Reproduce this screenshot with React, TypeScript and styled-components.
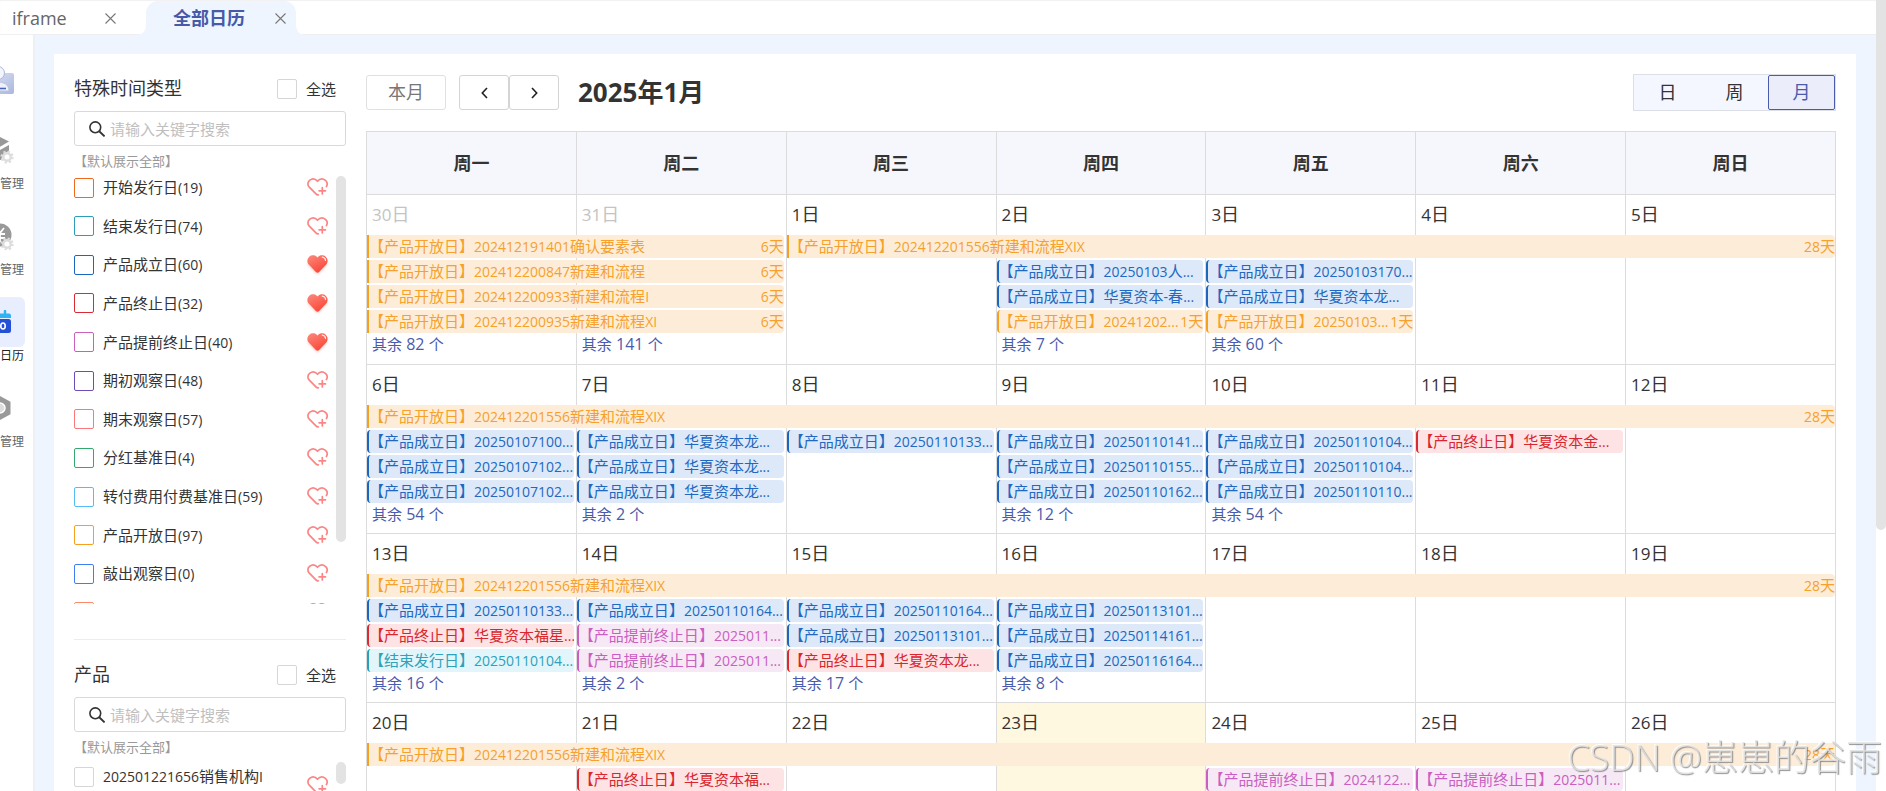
import React from "react";
import styled, { createGlobalStyle, css } from "styled-components";

const GlobalStyle = createGlobalStyle`
  * { box-sizing: border-box; }
  html, body { margin: 0; background: #fff; overflow: hidden; }
  body, button, input {
    font-family: "Open Sans", "Noto Sans CJK SC", sans-serif;
    color: #333;
  }
  button { margin: 0; padding: 0; border: 0; background: none; cursor: pointer; }
`;

const palette = {
  open: { ink: "#f5a12c", edge: "#f5a01f", fill: "#fdedd8" },
  found: { ink: "#2169c0", edge: "#1c67bd", fill: "#dde8f9" },
  end: { ink: "#d9262f", edge: "#d92b34", fill: "#fde3e3" },
  early: { ink: "#c95fc0", edge: "#c95fc0", fill: "#f7e8f6" },
  issued: { ink: "#2fa1b8", edge: "#2aa0b8", fill: "#e2f5fb" },
};
type Kind = keyof typeof palette;

const tagNames: Record<Kind, string> = {
  open: "产品开放日",
  found: "产品成立日",
  end: "产品终止日",
  early: "产品提前终止日",
  issued: "结束发行日",
};

/* ---------- shell ---------- */

const Page = styled.div`
  display: flex;
  height: 100vh;
  overflow: hidden;
`;

const Main = styled.div`
  flex: 1;
  min-width: 0;
  display: flex;
  flex-direction: column;
`;

const PageScroll = styled.div`
  flex: 0 0 10px;
  background: #fff;
`;

const PageThumb = styled.div`
  height: 67vh;
  background: #e3e3e3;
  border-radius: 0 0 5px 5px;
`;

const TabBar = styled.nav`
  flex: none;
  display: flex;
  height: 35px;
  padding-top: 1px;
  border-bottom: 1px solid #efefef;
  box-shadow: inset 0 1px 1px #f1f1f1;
`;

const Tab = styled.div<{ $active?: boolean }>`
  position: relative;
  display: flex;
  align-items: center;
  justify-content: space-between;
  width: ${(p) => (p.$active ? 150 : 146)}px;
  padding: ${(p) => (p.$active ? "0 10px 0 27px" : "0 30px 0 12px")};
  margin-bottom: -1px;
  ${(p) =>
    p.$active &&
    css`
      background: #eef5ff;
      border-radius: 12px 12px 0 0;
      &::before,
      &::after {
        content: "";
        position: absolute;
        bottom: 0;
        width: 8px;
        height: 8px;
      }
      &::before {
        left: -8px;
        background: radial-gradient(circle at 0 0, transparent 7px, #eef5ff 8px);
      }
      &::after {
        right: -8px;
        background: radial-gradient(circle at 100% 0, transparent 7px, #eef5ff 8px);
      }
    `}
`;

const TabLink = styled.a<{ $active?: boolean }>`
  font-size: 18px;
  line-height: 34px;
  text-decoration: none;
  color: ${(p) => (p.$active ? "#465aa8" : "#666")};
  font-weight: ${(p) => (p.$active ? 700 : 400)};
`;

const TabClose = styled.button`
  display: flex;
  svg { display: block; }
`;

const Below = styled.div`
  flex: 1;
  min-height: 0;
  display: flex;
`;

const SideNav = styled.nav`
  flex: 0 0 35px;
  border-right: 2px solid #eceff4;
  background: #fff;
  overflow: hidden;
  padding-top: 31px;
`;

const Avatar = styled.div`
  height: 59px;
  svg { display: block; }
`;

const SideItem = styled.a`
  display: flex;
  flex-direction: column;
  align-items: center;
  width: 50px;
  height: 86px;
  margin-left: -25px;
  text-decoration: none;
`;

const SideIcon = styled.span<{ $active?: boolean }>`
  display: flex;
  align-items: center;
  justify-content: center;
  width: 50px;
  height: 50px;
  border-radius: 6px;
  background: ${(p) => (p.$active ? "#e9eefe" : "transparent")};
`;

const SideLabel = styled.span<{ $active?: boolean }>`
  font-size: 12px;
  line-height: 18px;
  white-space: nowrap;
  color: ${(p) => (p.$active ? "#222" : "#666")};
`;

const Canvas = styled.main`
  flex: 1;
  min-width: 0;
  padding: 19px 20px 0 19px;
  background: #eef5ff;
`;

const Card = styled.div`
  display: flex;
  gap: 20px;
  height: 100%;
  overflow: hidden;
  padding: 20px 20px 0;
  background: #fff;
`;

/* ---------- filter panel ---------- */

const Filters = styled.aside`
  flex: 0 0 272px;
`;

const FilterHead = styled.div`
  display: flex;
  align-items: center;
  justify-content: space-between;
  height: 30px;
  padding-right: 10px;
`;

const FilterTitle = styled.h2`
  margin: 0;
  padding-bottom: 2px;
  font-size: 18px;
  font-weight: 400;
  line-height: 28px;
`;

const CheckLabel = styled.label`
  display: flex;
  align-items: center;
  gap: 9px;
  font-size: 15px;
  line-height: 20px;
`;

const Check = styled.input<{ $tone?: string }>`
  appearance: none;
  flex: none;
  width: 20px;
  height: 20px;
  margin: 0;
  border: 1px solid ${(p) => p.$tone ?? "#d6d6d6"};
  border-radius: 2px;
  background: #fff;
`;

const SearchBox = styled.label`
  display: flex;
  align-items: center;
  gap: 5px;
  height: 35px;
  margin-top: 7px;
  padding: 0 10px 0 14px;
  border: 1px solid #d9d9d9;
  border-radius: 3px;
`;

const SearchInput = styled.input`
  flex: 1;
  min-width: 0;
  padding: 0;
  border: 0;
  outline: 0;
  font-size: 15px;
  &::placeholder { color: #bfbfbf; opacity: 1; }
`;

const Hint = styled.p`
  margin: 0;
  font-size: 13px;
  line-height: 30px;
  color: #999;
`;

const ListPort = styled.div<{ $height: number }>`
  display: flex;
  justify-content: space-between;
  height: ${(p) => p.$height}px;
  overflow: hidden;
`;

const List = styled.ul<{ $height: number }>`
  flex: 1;
  display: grid;
  align-content: space-between;
  height: ${(p) => p.$height}px;
  margin: 0;
  padding: 1px 8px 0 0;
  list-style: none;
`;

const ListRow = styled.li<{ $low?: boolean }>`
  display: flex;
  align-items: ${(p) => (p.$low ? "flex-end" : "center")};
  justify-content: space-between;
  height: ${(p) => (p.$low ? 28 : 20)}px;
  margin-top: ${(p) => (p.$low ? 3 : 0)}px;
  ${CheckLabel} { align-self: flex-start; }
`;

const Thumb = styled.div<{ $height: number }>`
  flex: 0 0 10px;
  height: ${(p) => p.$height}px;
  border-radius: 5px;
  background: #e3e3e3;
`;

const HeartButton = styled.button`
  display: flex;
  height: 18px;
  svg { display: block; overflow: visible; }
`;

const Rule = styled.hr`
  height: 1px;
  margin: 35px 0 20px;
  border: 0;
  background: #ececec;
`;

const Latin = styled.span<{ $size: number }>`
  font-size: ${(p) => p.$size}px;
`;

/* ---------- calendar ---------- */

const Calendar = styled.section`
  flex: 1;
  min-width: 0;
`;

const Toolbar = styled.header`
  display: flex;
  align-items: center;
  height: 37px;
`;

const MonthButton = styled.button`
  width: 80px;
  height: 35px;
  border: 1px solid #e0e0e0;
  border-radius: 3px;
  font-size: 18px;
  line-height: 33px;
  color: #777;
`;

const Stepper = styled.div`
  display: flex;
  margin: 0 19px 0 13px;
`;

const StepButton = styled.button`
  display: flex;
  align-items: center;
  justify-content: center;
  width: 50px;
  height: 35px;
  border: 1px solid #d4d4d4;
  border-radius: 3px;
`;

const MonthTitle = styled.h1`
  flex: 1;
  margin: 0;
  padding-bottom: 2px;
  font-size: 26px;
  line-height: 34px;
`;

const ViewSwitch = styled.div`
  display: flex;
  height: 37px;
  border: 1px solid #dcdfe6;
  background: #f4f7ff;
`;

const ViewButton = styled.button<{ $active?: boolean }>`
  width: 67px;
  height: 35px;
  font-size: 18px;
  line-height: 33px;
  border: 1px solid ${(p) => (p.$active ? "#4a5bad" : "transparent")};
  border-radius: 2px;
  color: ${(p) => (p.$active ? "#4a5bad" : "#333")};
  background: ${(p) => (p.$active ? "#ebedfb" : "transparent")};
`;

const DayHead = styled.th`
  height: 63px;
  padding: 0 0 2px;
  border: 1px solid #dcdcdc;
  background: #f6f7fd;
  font-size: 18px;
  font-weight: 700;
`;

const DayCell = styled.td<{ $today?: boolean }>`
  height: 169px;
  padding: 0;
  vertical-align: top;
  border: 1px solid #dcdcdc;
  background: ${(p) => (p.$today ? "#fff8e0" : "#fff")};
`;

const MonthTable = styled.table`
  width: 100%;
  margin-top: 20px;
  border-collapse: collapse;
  table-layout: fixed;
  tbody tr:first-child ${DayCell} { height: 170px; }
`;

const DayNumber = styled.div<{ $muted?: boolean }>`
  height: 40px;
  padding-left: 5px;
  font-size: 18px;
  line-height: 38px;
  color: ${(p) => (p.$muted ? "#c4c4c4" : "#333")};
`;

const Lane = styled.div`
  height: 23px;
  margin-bottom: 2px;
`;

const Bar = styled(Lane)<{ $kind: Kind; $span: number }>`
  position: relative;
  z-index: 1;
  display: flex;
  justify-content: space-between;
  width: calc(${(p) => p.$span * 100}% + ${(p) => (p.$span > 2 ? p.$span - 1 : p.$span - 3)}px);
  overflow: hidden;
  border-left: 2px solid ${(p) => palette[p.$kind].edge};
  border-radius: ${(p) => (p.$span > 1 ? "0 4px 4px 0" : "4px")};
  background: ${(p) => palette[p.$kind].fill};
  color: ${(p) => palette[p.$kind].ink};
  font-size: 15px;
  line-height: 23px;
  white-space: nowrap;
`;

const BarText = styled.span`
  min-width: 0;
  overflow: hidden;
`;

const More = styled.a`
  display: block;
  margin-top: -1px;
  padding-left: 5px;
  font-size: 15px;
  line-height: 20px;
  text-decoration: none;
  color: #4a5bad;
`;

const Watermark = styled.div`
  position: fixed;
  right: 4px;
  bottom: 8px;
  z-index: 5;
  font-size: 36px;
  line-height: 50px;
  font-weight: 300;
  white-space: nowrap;
  color: rgba(226, 226, 226, 0.85);
  text-shadow: 1px 1px 1px rgba(110, 110, 110, 0.75), -1px -1px 0 rgba(255, 255, 255, 0.7);
  pointer-events: none;
`;

/* ---------- drawings ---------- */

const CloseIcon = () => (
  <svg width="11" height="11" viewBox="0 0 11 11" stroke="#777" strokeWidth="1.1">
    <path d="M.5.5l10 10M10.5.5l-10 10" />
  </svg>
);

const SearchIcon = () => (
  <svg width="16" height="16" viewBox="0 0 16 16" fill="none" stroke="#333" strokeWidth="1.6">
    <circle cx="6.3" cy="6.3" r="5.4" />
    <path d="M10.2 10.2l5.4 5.2" strokeWidth="1.9" />
  </svg>
);

const Chevron = ({ back }: { back?: boolean }) => (
  <svg width="7" height="12" viewBox="0 0 7 12" fill="none" stroke="#222" strokeWidth="1.6">
    <path d={back ? "M6 1L1.3 6 6 11" : "M1 1l4.7 5L1 11"} />
  </svg>
);

const HeartPlus = () => (
  <svg width="21" height="18" viewBox="0 0 21 18" fill="none" stroke="#fb8585" strokeWidth="1.7" strokeLinecap="round">
    <path d="M19.4 8.6C20.6 6.6 20.3 4 18.4 2.4 16 .4 12.9.6 10.5 3.1 8.1.6 5 .4 2.6 2.4.4 4.4.4 7.3 2.3 9.2l6.9 7c.7.7 1.4.9 2.2.6" />
    <path d="M15.3 9.6v6.4M12.1 12.8h6.4" />
  </svg>
);

const HeartSolid = () => (
  <svg width="21" height="18" viewBox="0 0 21 18">
    <defs>
      <linearGradient id="heartFill" x1="0" y1="0" x2="0.6" y2="1">
        <stop offset="0" stopColor="#fb8a7e" />
        <stop offset="1" stopColor="#fa4738" />
      </linearGradient>
      <filter id="heartGlow" x="-30%" y="-20%" width="160%" height="170%">
        <feGaussianBlur stdDeviation="1.5" />
      </filter>
    </defs>
    <path d="M10.5 19L2 10.5C-.5 7.500 5 3 10.500 5 16 3 21.500 7.500 19 10.500z" fill="#fdb5ae" filter="url(#heartGlow)" />
    <path d="M10.500 2.400C8.200-.3 4.500-.2 2.300 1.700-.3 4.200-.1 7.500 2 9.700l6.900 7.400c1 1 2.200 1 3.200 0L19 9.700c2.100-2.200 2.300-5.500-.3-8C16.500-.2 12.800-.3 10.500 2.400z" fill="url(#heartFill)" />
    <path d="M15.300 2.200c1.900.2 3.100 1.400 3.200 3.300" fill="none" stroke="#fff" strokeOpacity=".85" strokeWidth="1.200" strokeLinecap="round" />
  </svg>
);

const AvatarIcon = () => (
  <svg width="15" height="30" viewBox="0 0 15 30">
    <defs>
      <linearGradient id="plate" x1="0" y1="0" x2="1" y2="1">
        <stop offset="0" stopColor="#dfe4f5" />
        <stop offset="1" stopColor="#a9b6dd" />
      </linearGradient>
    </defs>
    <rect x="-14" y="7" width="28" height="21" rx="2" fill="url(#plate)" />
    <circle cx="-2" cy="7" r="6.500" fill="#f3f5fd" stroke="#aab5d8" strokeWidth="1" />
    <path d="M-12 25c0-7 5-9 10-9s11 2 11 9z" fill="#eef1fc" stroke="#b6c0e0" strokeWidth="1" />
    <path d="M-4 22.500H6" stroke="#4a66b5" strokeWidth="1.600" />
  </svg>
);

const Gear = ({ x, y }: { x: number; y: number }) => (
  <g transform={`translate(${x} ${y})`}>
    <circle r="5" fill="#ddd" />
    <circle r="5.600" fill="none" stroke="#ddd" strokeWidth="2" strokeDasharray="2.200 2.200" />
    <circle r="2.500" fill="#fff" />
  </g>
);

const BoxIcon = () => (
  <svg width="30" height="28" viewBox="0 0 30 28">
    <path d="M13 0l11 5.500-11 6.500-11-6.500z" fill="#999" />
    <path d="M3 8l10 5.500V26L3 20zM15 14l9-5v6l-6 3-2 6h-1z" fill="#999" />
    <Gear x={22} y={21} />
  </svg>
);

const YuanIcon = () => (
  <svg width="30" height="28" viewBox="0 0 30 28">
    <circle cx="15" cy="13" r="11.500" fill="#999" />
    <path d="M11 6l4 5 4-5M10 12h10M10 16h10M15 11v9" stroke="#fff" strokeWidth="1.800" fill="none" />
    <Gear x={22} y={22} />
  </svg>
);

const CalendarIcon = () => (
  <svg width="24" height="24" viewBox="0 0 24 24">
    <rect x="1" y="9" width="22" height="14" rx="2.500" fill="#2450d8" />
    <path d="M1 8V5.500A2 2 0 013 3.500h18a2 2 0 012 2V8z" fill="#2fb3f3" />
    <path d="M6.500 1v4M17 1v4" stroke="#2fb3f3" strokeWidth="2.500" strokeLinecap="round" />
    <path d="M8 13v6" stroke="#fff" strokeWidth="1.600" />
    <ellipse cx="15" cy="16" rx="2.200" ry="3" fill="none" stroke="#fff" strokeWidth="1.600" />
  </svg>
);

const NutIcon = () => (
  <svg width="24" height="26" viewBox="0 0 24 26">
    <path d="M12 1l10.500 5.800v12.400L12 25 1.500 19.200V6.800z" fill="#999" />
    <circle cx="12" cy="13" r="5" fill="#ddd" stroke="#fff" strokeWidth="1.500" />
  </svg>
);

/* ---------- data ---------- */

const dateTypes: [string, number, string, boolean][] = [
  ["开始发行日", 19, "#ee6a1f", false],
  ["结束发行日", 74, "#2aa0b8", false],
  ["产品成立日", 60, "#1c67bd", true],
  ["产品终止日", 32, "#d92b34", true],
  ["产品提前终止日", 40, "#c95fc0", true],
  ["期初观察日", 48, "#6d4cb8", false],
  ["期末观察日", 57, "#fb7878", false],
  ["分红基准日", 4, "#34a86e", false],
  ["转付费用付费基准日", 59, "#55bdf3", false],
  ["产品开放日", 97, "#f5a01f", false],
  ["敲出观察日", 0, "#3d7ff0", false],
  ["敲入观察日", 12, "#fb8a66", false],
];

interface Entry {
  kind: Kind;
  text: string;
  span?: number;
  days?: string;
}
interface Day {
  day: number;
  muted?: boolean;
  today?: boolean;
  lanes: (Entry | null)[];
  more?: number;
}

const open = (text: string, span: number, days: string): Entry => ({ kind: "open", text, span, days });
const found = (text: string): Entry => ({ kind: "found", text });
const end = (text: string): Entry => ({ kind: "end", text });
const early = (text: string): Entry => ({ kind: "early", text });
const longRun = (span: number) => open("202412201556新建和流程XIX", span, "28天");

const weeks: Day[][] = [
  [
    {
      day: 30,
      muted: true,
      lanes: [
        open("202412191401确认要素表", 2, "6天"),
        open("202412200847新建和流程", 2, "6天"),
        open("202412200933新建和流程I", 2, "6天"),
        open("202412200935新建和流程XI", 2, "6天"),
      ],
      more: 82,
    },
    { day: 31, muted: true, lanes: [null, null, null, null], more: 141 },
    { day: 1, lanes: [longRun(5)] },
    { day: 2, lanes: [null, found("20250103人..."), found("华夏资本-春..."), open("20241202...", 1, "1天")], more: 7 },
    { day: 3, lanes: [null, found("20250103170..."), found("华夏资本龙..."), open("20250103...", 1, "1天")], more: 60 },
    { day: 4, lanes: [] },
    { day: 5, lanes: [] },
  ],
  [
    { day: 6, lanes: [longRun(7), found("20250107100..."), found("20250107102..."), found("20250107102...")], more: 54 },
    { day: 7, lanes: [null, found("华夏资本龙..."), found("华夏资本龙..."), found("华夏资本龙...")], more: 2 },
    { day: 8, lanes: [null, found("20250110133...")] },
    { day: 9, lanes: [null, found("20250110141..."), found("20250110155..."), found("20250110162...")], more: 12 },
    { day: 10, lanes: [null, found("20250110104..."), found("20250110104..."), found("20250110110...")], more: 54 },
    { day: 11, lanes: [null, end("华夏资本金...")] },
    { day: 12, lanes: [] },
  ],
  [
    {
      day: 13,
      lanes: [longRun(7), found("20250110133..."), end("华夏资本福星..."), { kind: "issued", text: "20250110104..." }],
      more: 16,
    },
    { day: 14, lanes: [null, found("20250110164..."), early("2025011..."), early("2025011...")], more: 2 },
    { day: 15, lanes: [null, found("20250110164..."), found("20250113101..."), end("华夏资本龙...")], more: 17 },
    { day: 16, lanes: [null, found("20250113101..."), found("20250114161..."), found("20250116164...")], more: 8 },
    { day: 17, lanes: [] },
    { day: 18, lanes: [] },
    { day: 19, lanes: [] },
  ],
  [
    { day: 20, lanes: [longRun(7)] },
    { day: 21, lanes: [null, end("华夏资本福...")] },
    { day: 22, lanes: [] },
    { day: 23, today: true, lanes: [] },
    { day: 24, lanes: [null, early("2024122...")] },
    { day: 25, lanes: [null, early("2025011...")] },
    { day: 26, lanes: [] },
  ],
];

/* ---------- pieces ---------- */

/* Latin runs get their own size beside the Chinese around them. */
const Mixed = ({ text, size = 14 }: { text: string; size?: number }) => (
  <>
    {(text.match(/[\x20-\x7e]+|[^\x20-\x7e]+/g) ?? []).map((run, i) =>
      /^[\x20-\x7e]/.test(run) ? (
        <Latin key={i} $size={size}>
          {run}
        </Latin>
      ) : (
        run
      )
    )}
  </>
);

const FilterTop = ({ title }: { title: string }) => (
  <>
    <FilterHead>
      <FilterTitle>{title}</FilterTitle>
      <CheckLabel>
        <Check type="checkbox" />
        全选
      </CheckLabel>
    </FilterHead>
    <SearchBox>
      <SearchIcon />
      <SearchInput type="text" placeholder="请输入关键字搜索" aria-label={title} />
    </SearchBox>
    <Hint>【默认展示全部】</Hint>
  </>
);

const FilterItem = ({ name, tone, liked, low }: { name: string; tone?: string; liked?: boolean; low?: boolean }) => (
  <ListRow $low={low}>
    <CheckLabel>
      <Check type="checkbox" $tone={tone} />
      <span>
        <Mixed text={name} />
      </span>
    </CheckLabel>
    <HeartButton type="button" aria-label="收藏">
      {liked ? <HeartSolid /> : <HeartPlus />}
    </HeartButton>
  </ListRow>
);

const EventBar = ({ entry }: { entry: Entry }) => (
  <Bar $kind={entry.kind} $span={entry.span ?? 1}>
    <BarText>
      【{tagNames[entry.kind]}】<Mixed text={entry.text} />
    </BarText>
    {entry.days && (
      <span>
        <Mixed text={entry.days} />
      </span>
    )}
  </Bar>
);

export default function App() {
  return (
    <Page>
      <GlobalStyle />
      <Main>
        <TabBar>
          <Tab>
            <TabLink href="#iframe">iframe</TabLink>
            <TabClose type="button" aria-label="关闭">
              <CloseIcon />
            </TabClose>
          </Tab>
          <Tab $active>
            <TabLink href="#calendar" $active>
              全部日历
            </TabLink>
            <TabClose type="button" aria-label="关闭">
              <CloseIcon />
            </TabClose>
          </Tab>
        </TabBar>
        <Below>
          <SideNav>
            <Avatar>
              <AvatarIcon />
            </Avatar>
            <SideItem href="#product">
              <SideIcon>
                <BoxIcon />
              </SideIcon>
              <SideLabel>产品管理</SideLabel>
            </SideItem>
            <SideItem href="#fund">
              <SideIcon>
                <YuanIcon />
              </SideIcon>
              <SideLabel>资金管理</SideLabel>
            </SideItem>
            <SideItem href="#calendar">
              <SideIcon $active>
                <CalendarIcon />
              </SideIcon>
              <SideLabel $active>产品日历</SideLabel>
            </SideItem>
            <SideItem href="#system">
              <SideIcon>
                <NutIcon />
              </SideIcon>
              <SideLabel>系统管理</SideLabel>
            </SideItem>
          </SideNav>
          <Canvas>
            <Card>
              <Filters>
                <FilterTop title="特殊时间类型" />
                <ListPort $height={428}>
                  <List $height={446}>
                    {dateTypes.map(([name, count, tone, liked]) => (
                      <FilterItem key={name} name={`${name}(${count})`} tone={tone} liked={liked} />
                    ))}
                  </List>
                  <Thumb $height={366} />
                </ListPort>
                <Rule />
                <FilterTop title="产品" />
                <ListPort $height={60}>
                  <List $height={40}>
                    <FilterItem name="202501221656销售机构I" low />
                  </List>
                  <Thumb $height={22} />
                </ListPort>
              </Filters>
              <Calendar>
                <Toolbar>
                  <MonthButton type="button">本月</MonthButton>
                  <Stepper>
                    <StepButton type="button" aria-label="上个月">
                      <Chevron back />
                    </StepButton>
                    <StepButton type="button" aria-label="下个月">
                      <Chevron />
                    </StepButton>
                  </Stepper>
                  <MonthTitle>
                    <Mixed text="2025年1月" size={26} />
                  </MonthTitle>
                  <ViewSwitch>
                    <ViewButton type="button">日</ViewButton>
                    <ViewButton type="button">周</ViewButton>
                    <ViewButton type="button" $active>
                      月
                    </ViewButton>
                  </ViewSwitch>
                </Toolbar>
                <MonthTable>
                  <thead>
                    <tr>
                      {["周一", "周二", "周三", "周四", "周五", "周六", "周日"].map((name) => (
                        <DayHead key={name} scope="col">
                          {name}
                        </DayHead>
                      ))}
                    </tr>
                  </thead>
                  <tbody>
                    {weeks.map((week) => (
                      <tr key={week[0].day}>
                        {week.map((d) => (
                          <DayCell key={d.day} $today={d.today}>
                            <DayNumber $muted={d.muted}>
                              <Mixed text={`${d.day}日`} size={17} />
                            </DayNumber>
                            {d.lanes.map((entry, i) => (entry ? <EventBar key={i} entry={entry} /> : <Lane key={i} />))}
                            {d.more && (
                              <More href={`#day-${d.day}`}>
                                <Mixed text={`其余 ${d.more} 个`} size={16} />
                              </More>
                            )}
                          </DayCell>
                        ))}
                      </tr>
                    ))}
                  </tbody>
                </MonthTable>
              </Calendar>
            </Card>
          </Canvas>
        </Below>
      </Main>
      <PageScroll>
        <PageThumb />
      </PageScroll>
      <Watermark>CSDN @崽崽的谷雨</Watermark>
    </Page>
  );
}
